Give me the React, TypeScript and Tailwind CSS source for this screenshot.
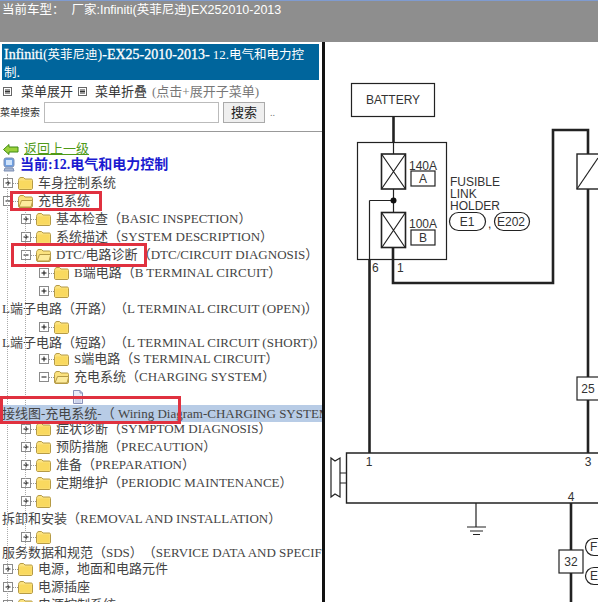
function Toggle({ open }: { open?: boolean }) {
  return (
    <svg width="10" height="10" viewBox="0 0 10 10" className="shrink-0">
      <rect x="0.5" y="0.5" width="9" height="9" fill="#fff" stroke="#8a8a8a" />
      <path d={open ? "M2.5 5H7.5" : "M2.5 5H7.5M5 2.5V7.5"} stroke="#111" />
    </svg>
  );
}

function Folder({ open }: { open?: boolean }) {
  return (
    <svg width="15" height="14" viewBox="0 0 15 14" className="shrink-0">
      <path d="M.5 4.5C.5 3 1.5 1.5 3 1.5H5.5L7 3H13C14 3 14.5 3.5 14.5 4.5V12C14.5 13 14 13.5 13 13.5H2C1 13.5 .5 13 .5 12Z" fill="#fbe27f" stroke="#b59a45" />
      {open ? (
        <path d="M1 13L3.5 6.5H14.8L13 13Z" fill="#fdeb9c" stroke="#b59a45" />
      ) : (
        <path d="M1.5 4.5H13.5V12.5H1.5Z" fill="#f9d95f" />
      )}
    </svg>
  );
}

function PageIcon() {
  return (
    <svg width="12" height="14" viewBox="0 0 12 14">
      <path d="M1.5 .5H8L10.5 3V13.5H1.5Z" fill="#e8ecf8" stroke="#8890b8" />
      <path d="M8 .5V3H10.5" fill="none" stroke="#8890b8" />
      <path d="M3 10H9M3 12H9" stroke="#b4bcdc" />
    </svg>
  );
}

function MenuIcon() {
  return (
    <svg width="9" height="9" viewBox="0 0 9 9" className="shrink-0">
      <rect x=".5" y=".5" width="8" height="8" fill="#fff" stroke="#666" />
      <path d="M2 3H7M2 4.5H7M2 6H7" stroke="#333" />
    </svg>
  );
}

function Row({ level, open, label, latin }: { level: number; open?: boolean; label?: string; latin?: string }) {
  const pad = level === 0 ? "pl-[3px]" : level === 1 ? "pl-[21px]" : "pl-[39px]";
  return (
    <div className={`flex h-[18px] items-center whitespace-nowrap ${pad}`}>
      <Toggle open={open} />
      <div className="w-[5px] border-t border-dotted border-[#999]" />
      <Folder open={open} />
      {label && (
        <span className="ml-[5px] text-[13px] text-[#444]">
          {label}
          {latin}
        </span>
      )}
    </div>
  );
}

function TextRow({ children, tall }: { children: string; tall?: boolean }) {
  return (
    <div className={`flex items-center whitespace-nowrap pl-[2px] text-[13px] text-[#444] ${tall ? "h-[18px]" : "h-[14px]"}`}>
      {children}
    </div>
  );
}

function Diagram() {
  return (
    <svg className="block h-[560px] w-[273px]" viewBox="325 42 273 560">
      <g fill="none" stroke="#222" strokeWidth="1.2">
        <rect x="351.5" y="83.5" width="83" height="33" />
        <rect x="357.5" y="142.5" width="89" height="117" />
        <rect x="381.5" y="154" width="24" height="35" strokeWidth="1.6" />
        <path d="M381.5 154L405.5 189M405.5 154L381.5 189" />
        <rect x="381.5" y="212.5" width="24" height="35" strokeWidth="1.6" />
        <path d="M381.5 212.5L405.5 248M405.5 212.5L381.5 248" />
        <rect x="411" y="171" width="24" height="15" />
        <rect x="411" y="230" width="24" height="15" />
        <rect x="449.5" y="212.5" width="36" height="18" rx="9" />
        <rect x="494.5" y="212.5" width="35" height="18" rx="9" />
        <path d="M393.5 116V142" strokeWidth="2.6" />
        <path d="M393.5 142V154M393.5 189V212M369.5 200.5H393.5" />
        <path d="M369.5 200.5V259" />
        <path d="M369.5 259V453" strokeWidth="2.6" />
        <path d="M393 248V283H553V130H588V154" strokeWidth="2.6" />
        <rect x="577" y="154" width="30" height="35" strokeWidth="1.4" />
        <path d="M577 189L598 158" />
        <path d="M588 189V377M588 400V453" strokeWidth="2.6" />
        <rect x="577" y="377" width="30" height="23" fill="#fff" />
        <path d="M598 453H346.5V503H598" strokeWidth="1.4" />
        <path d="M476 503V527M467 527H486M470 531H483M473 534.5H480" />
        <path d="M571 503V550M571 573V602" strokeWidth="2.6" />
        <rect x="559" y="550" width="24" height="23" />
        <rect x="585.5" y="538.5" width="30" height="17" rx="8.5" />
        <rect x="585.5" y="567.5" width="30" height="17" rx="8.5" />
        <path d="M331 458L335 461L340 458V497L335 494L331 497Z" />
        <path d="M340 473H346M340 483H346" />
      </g>
      <circle cx="393.5" cy="200.5" r="3" fill="#111" />
      <g className="fill-[#333] text-[12px] [font-family:'Liberation_Sans',sans-serif]">
        <text x="393" y="104" textAnchor="middle">BATTERY</text>
        <text x="409" y="170">140A</text>
        <text x="423" y="183" textAnchor="middle">A</text>
        <text x="409" y="228">100A</text>
        <text x="423" y="242" textAnchor="middle">B</text>
        <text x="450" y="186">FUSIBLE</text>
        <text x="450" y="198">LINK</text>
        <text x="450" y="210">HOLDER</text>
        <text x="467" y="226" textAnchor="middle">E1</text>
        <text x="488" y="228">,</text>
        <text x="511" y="226" textAnchor="middle">E202</text>
        <text x="372" y="272">6</text>
        <text x="397" y="272">1</text>
        <text x="369" y="466" textAnchor="middle">1</text>
        <text x="588" y="466" textAnchor="middle">3</text>
        <text x="571" y="501" textAnchor="middle">4</text>
        <text x="588" y="393" textAnchor="middle">25</text>
        <text x="571" y="566" textAnchor="middle">32</text>
        <text x="590" y="551">F</text>
        <text x="590" y="580">E</text>
      </g>
    </svg>
  );
}

export default function App() {
  return (
    <div className="h-[602px] w-[598px] overflow-hidden bg-white [font-family:'Liberation_Serif','Noto_Sans_CJK_SC',serif] [text-spacing-trim:space-all]">
      <header className="h-[42px] whitespace-pre border-t border-[#7f9bd0] bg-[#8e8e8e] pl-[2px] text-[12.5px] leading-[19px] text-white [font-family:'Liberation_Sans','Noto_Sans_CJK_SC',sans-serif]">
        当前车型：  厂家:Infiniti(英菲尼迪)EX252010-2013
      </header>
      <div className="flex h-[560px]">
        <aside className="relative h-full w-[322px] shrink-0 overflow-hidden">
          <h1 className="mx-[2px] mt-[2px] h-[36px] w-[317px] bg-[#00659c] pl-[2px] pt-[2px] text-[14px] leading-[17px] font-normal text-white">
            <span className="[-webkit-text-stroke:0.3px_white]">Infiniti</span>(<span className="text-[12.5px]">英菲尼迪</span>)<span className="[-webkit-text-stroke:0.3px_white]">-EX25-2010-2013-</span><span className="text-[13px]"> 12.</span><span className="text-[12.5px]">电气和电力控<br />制</span>.
          </h1>
          <div className="mt-[3px] flex h-[17px] items-center whitespace-nowrap pl-[3px] text-[13px] text-[#333]">
            <MenuIcon />
            <span className="ml-[9px]">菜单展开</span>
            <span className="ml-[5px]"><MenuIcon /></span>
            <span className="ml-[8px]">菜单折叠</span>
            <span className="ml-[5px] text-[#777]">(点击+展开子菜单)</span>
          </div>
          <div className="mt-px flex h-[23px] items-center whitespace-nowrap">
            <span className="w-[44px] shrink-0 text-[10px] text-[#333]">菜单搜索</span>
            <div className="h-[21px] w-[175px] shrink-0 border border-[#bbb] bg-white" />
            <button className="ml-[4px] h-[21px] w-[42px] shrink-0 border border-[#aaa] bg-[#efefef] text-[13px] text-[#222]">搜索</button>
            <span className="ml-[5px] text-[10px] text-[#777]">..</span>
          </div>
          <div className="mt-[7px] h-px w-full bg-[#999]" />

          <div className="mt-[9px] flex h-[16px] items-center pl-[3px]">
            <svg width="16" height="11" viewBox="0 0 16 11">
              <path d="M.5 5.5L6 .5V3H15V8H6V10.5Z" fill="#9bd13c" stroke="#3f8a12" />
            </svg>
            <a className="ml-[5px] text-[13px] text-[#4f9a18] underline">返回上一级</a>
          </div>
          <div className="flex h-[17px] items-center pb-[2px] pl-[3px]">
            <svg width="12" height="15" viewBox="0 0 12 15">
              <rect x="1" y="1" width="10" height="9" rx="2" fill="#6f9fe0" stroke="#7c8fb5" />
              <rect x="3" y="3" width="6" height="5" fill="#cfe3fb" />
              <path d="M2 11H10L11 14H1Z" fill="#a7b6d0" stroke="#7c8fb5" />
            </svg>
            <span className="ml-[5px] text-[14px] font-bold text-[#1a1ad0]">当前:12.电气和电力控制</span>
          </div>

          <div className="relative">
            <div className="absolute left-[7px] top-0 h-full border-l border-dotted border-[#aaa]" />
            <div className="absolute left-[25px] top-[36px] h-[345px] border-l border-dotted border-[#aaa]" />
            <Row level={0} label="车身控制系统" />
            <Row level={0} open label="充电系统" />
            <Row level={1} label="基本检查" latin="（BASIC INSPECTION）" />
            <Row level={1} label="系统描述" latin="（SYSTEM DESCRIPTION）" />
            <Row level={1} open label="DTC/电路诊断" latin="（DTC/CIRCUIT DIAGNOSIS）" />
            <Row level={2} label="B端电路" latin="（B TERMINAL CIRCUIT）" />
            <Row level={2} />
            <TextRow tall>L端子电路（开路）（L TERMINAL CIRCUIT (OPEN)）</TextRow>
            <Row level={2} />
            <TextRow>L端子电路（短路）（L TERMINAL CIRCUIT (SHORT)）</TextRow>
            <Row level={2} label="S端电路" latin="（S TERMINAL CIRCUIT）" />
            <Row level={2} open label="充电系统" latin="（CHARGING SYSTEM）" />
            <div className="flex h-[18px] items-end pl-[72px]">
              <PageIcon />
            </div>
            <div className="relative mb-[-2px] mt-px flex h-[17px] items-center whitespace-nowrap bg-[#b8cce6] pl-[2px] text-[13px] text-[#444]">
              接线图-充电系统-（ Wiring Diagram-CHARGING SYSTEM）
            </div>
            <Row level={1} label="症状诊断" latin="（SYMPTOM DIAGNOSIS）" />
            <Row level={1} label="预防措施" latin="（PRECAUTION）" />
            <Row level={1} label="准备" latin="（PREPARATION）" />
            <Row level={1} label="定期维护" latin="（PERIODIC MAINTENANCE）" />
            <Row level={1} />
            <TextRow tall>拆卸和安装（REMOVAL AND INSTALLATION）</TextRow>
            <Row level={1} />
            <TextRow>服务数据和规范（SDS）（SERVICE DATA AND SPECIFICATIONS）</TextRow>
            <Row level={0} label="电源，地面和电路元件" />
            <Row level={0} label="电源插座" />
            <Row level={0} label="电源控制系统" />

            <div className="absolute left-[10px] top-[17px] h-[20px] w-[92px] border-[3px] border-[#e0313f]" />
            <div className="absolute left-[11px] top-[69px] h-[24px] w-[136px] border-[3px] border-[#e0313f]" />
            <div className="absolute left-0 top-[222px] h-[28px] w-[181px] border-[3px] border-[#e0313f]" />
          </div>
        </aside>
        <div className="h-full w-[3px] shrink-0 bg-[#111]" />
        <Diagram />
      </div>
    </div>
  );
}
